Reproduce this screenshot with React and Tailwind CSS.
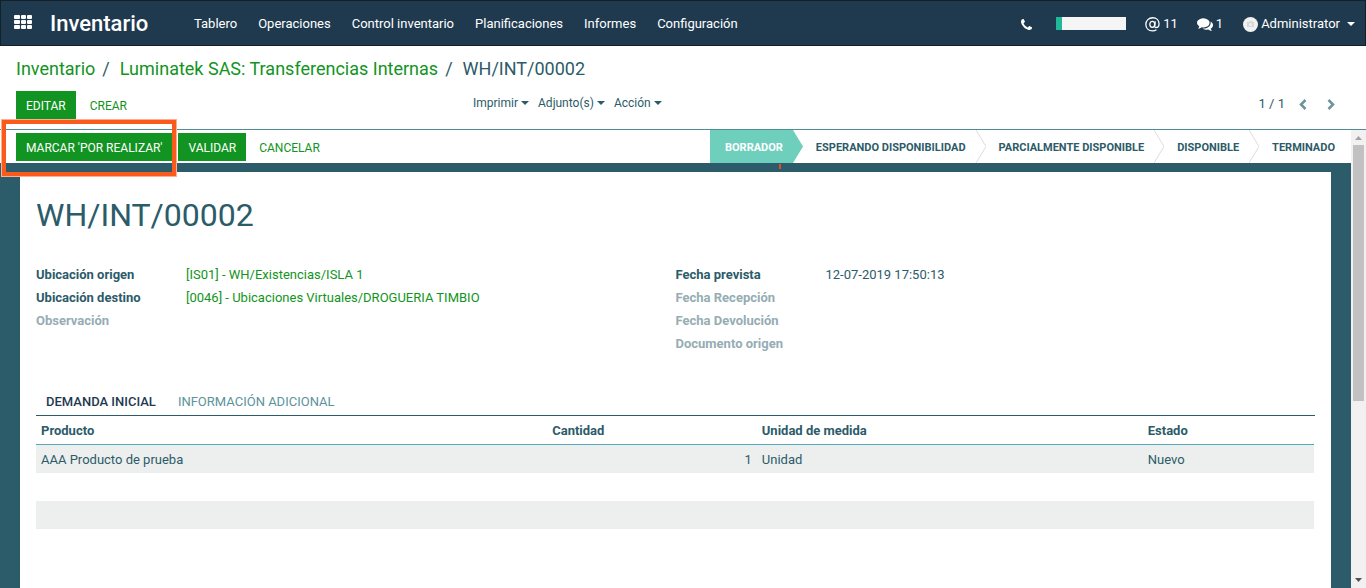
import { useState } from 'react';

const menuItems = ['Tablero', 'Operaciones', 'Control inventario', 'Planificaciones', 'Informes', 'Configuración'];

const steps = ['Borrador', 'Esperando disponibilidad', 'Parcialmente disponible', 'Disponible', 'Terminado'];

const leftFields = [
  { label: 'Ubicación origen', value: '[IS01] - WH/Existencias/ISLA 1', link: true },
  { label: 'Ubicación destino', value: '[0046] - Ubicaciones Virtuales/DROGUERIA TIMBIO', link: true },
  { label: 'Observación' },
];

const rightFields = [
  { label: 'Fecha prevista', value: '12-07-2019 17:50:13' },
  { label: 'Fecha Recepción' },
  { label: 'Fecha Devolución' },
  { label: 'Documento origen' },
];

const Caret = () => (
  <svg width="8" height="4" viewBox="0 0 8 4" fill="currentColor" aria-hidden="true">
    <path d="M0 0h8L4 4z" />
  </svg>
);

const GridIcon = () => (
  <svg width="19" height="14" viewBox="0 0 19 14" fill="currentColor" aria-hidden="true">
    {[0, 5, 10].map((y) =>
      [0, 7, 13].map((x) => <rect key={`${x}-${y}`} x={x} y={y} width={x === 0 ? 6 : 5} height="4" rx="1" />)
    )}
  </svg>
);

const PhoneIcon = () => (
  <svg width="11" height="11" viewBox="0 0 1408 1408" fill="currentColor" aria-hidden="true">
    <path d="M1408 1112q0 27-10 70.5t-21 68.5q-21 50-122 106-94 51-186 51-27 0-52.5-3.5t-57.5-12.5-47.5-14.5-55.5-20.5-49-18q-98-35-175-83-128-79-264.5-215.5t-215.5-264.5q-48-77-83-175-3-9-18-49t-20.5-55.5-14.5-47.5-12.5-57.5-3.5-52.5q0-92 51-186 56-101 106-122 25-11 68.5-21t70.5-10q14 0 21 3 18 6 53 76 11 19 30 54t35 63.5 31 53.5q3 4 17.5 25t21.5 35.5 7 28.5q0 20-28.5 50t-62 55-62 53-28.5 46q0 9 5 22.5t8.5 20.5 14 24 11.5 19q76 137 174 235t235 174q2 1 19 11.5t24 14 20.5 8.5 22.5 5q18 0 46-28.5t53-62 55-62 50-28.5q14 0 28.5 7t35.5 21.5 25 17.5q25 15 53.5 31t63.5 35 54 30q70 35 76 53 3 7 3 21z" />
  </svg>
);

const CommentsIcon = () => (
  <svg width="16" height="16" viewBox="0 0 1792 1792" fill="currentColor" aria-hidden="true">
    <path d="M1408 768q0 139-94 257t-256.5 186.5-353.5 68.5q-86 0-176-16-124 88-278 128-36 9-86 16h-3q-11 0-20.5-8t-11.5-21q-1-3-1-6.5t.5-6.5 2-6l2.5-5 3.5-5.5 4-5 4.5-5 4-4.5q5-6 23-25t26-29.5 22.5-29 25-38.5 20.5-44q-124-72-195-177t-71-224q0-139 94-257t256.5-186.5 353.5-68.5 353.5 68.5 256.5 186.5 94 257zm384 256q0 120-71 224.5t-195 176.5q10 24 20.5 44t25 38.5 22.5 29 26 29.5 23 25q1 1 4 4.5t4.5 5 4 5 3.5 5.5l2.5 5t2 6 .5 6.5-1 6.5q-3 14-13 22t-22 7q-50-7-86-16-154-40-278-128-90 16-176 16-271 0-472-132 58 4 88 4 161 0 309-45t264-129q125-92 192-212t67-254q0-77-23-152 129 71 204 178t75 230z" />
  </svg>
);

const AtIcon = () => (
  <svg width="15" height="15" viewBox="0 0 14 14" fill="none" stroke="currentColor" strokeWidth="1.2" aria-hidden="true">
    <ellipse cx="6.8" cy="6.8" rx="2.3" ry="2.8" />
    <path d="M9.6 4 9 8.200c-.1 1.200.4 1.600 1.200 1.600 1.700 0 2.900-1.500 2.900-3.600C13.100 3 10.600.7 7.200.7 3.500.7.8 3.300.8 6.900c0 3.500 2.500 6 6.200 6 1.500 0 2.600-.3 3.700-1" />
  </svg>
);

const Avatar = () => (
  <svg width="15" height="15" viewBox="0 0 15 15" aria-hidden="true">
    <circle cx="7.5" cy="7.5" r="7.5" fill="#f1f1f1" />
    <path d="M4 5h2l1-1h2l1 1h1v5H4z" fill="#d8d8d8" />
    <circle cx="7.5" cy="7.5" r="1.5" fill="#f1f1f1" />
  </svg>
);

const Chevron = ({ d }) => (
  <svg width="8" height="11" viewBox="0 0 8 11" fill="none" stroke="currentColor" strokeWidth="2.5" aria-hidden="true">
    <path d={d} />
  </svg>
);

function Navbar() {
  return (
    <nav className="flex h-[46px] items-center border border-[#12202c] bg-[#1f3a4f] pl-[13px] pr-[10px] text-white">
      <button aria-label="Aplicaciones" className="pb-[2px]">
        <GridIcon />
      </button>
      <h1 className="ml-[17px] w-[137px] pt-[2px] text-[22px] font-medium leading-none">Inventario</h1>
      <div className="ml-[7px] flex flex-1 items-center gap-[21px] pt-[2px]">
        {menuItems.map((item) => (
          <a key={item} href="#">{item}</a>
        ))}
      </div>
      <div className="flex items-center">
        <button aria-label="Teléfono" className="pt-[2px]"><PhoneIcon /></button>
        <div className="ml-6 h-[13px] w-[70px] bg-[#f5f5f5]">
          <div className="h-full w-[6px] bg-[#21b799]" />
        </div>
        <button className="ml-[19px] flex items-center gap-[3px] pt-[2px]"><AtIcon />11</button>
        <button className="ml-[19px] flex items-center gap-[3px] pt-[2px]"><CommentsIcon />1</button>
        <button className="ml-5 flex items-center gap-[3px] pt-[2px]">
          <Avatar />
          Administrator
          <span className="ml-1"><Caret /></span>
        </button>
      </div>
    </nav>
  );
}

function ControlPanel() {
  return (
    <header className="border-b border-[#4f8c93] px-4">
      <ol className="flex pt-3 text-[18px] leading-[22px]">
        <li><a href="#" className="text-[#119422]">Inventario</a></li>
        <li className="ml-[7px]">/</li>
        <li className="ml-[10px]"><a href="#" className="text-[#119422]">Luminatek SAS: Transferencias Internas</a></li>
        <li className="ml-[7px]">/</li>
        <li className="ml-[10px]">WH/INT/00002</li>
      </ol>
      <div className="flex pb-[10px] pt-[11px]">
        <div className="flex w-[457px] items-center gap-1">
          <button className="h-7 bg-[#119422] px-[10px] pt-[2px] text-[12px] text-white">EDITAR</button>
          <button className="h-7 px-[10px] pt-[2px] text-[12px] text-[#119422]">CREAR</button>
        </div>
        <div className="flex h-6 items-center gap-[9px] text-[12px]">
          {['Imprimir', 'Adjunto(s)', 'Acción'].map((item) => (
            <button key={item} className="flex items-center gap-[3px]">{item}<Caret /></button>
          ))}
        </div>
        <div className="flex flex-1 items-center justify-end pb-[2px] pr-[15px]">
          <span>1 / 1</span>
          <button aria-label="Anterior" className="ml-[14px] text-[#6f929d]"><Chevron d="M6.5 1 2 5.5 6.5 10" /></button>
          <button aria-label="Siguiente" className="ml-5 text-[#6f929d]"><Chevron d="M1.5 1 6 5.5 1.5 10" /></button>
        </div>
      </div>
    </header>
  );
}

function StatusBar() {
  return (
    <div className="flex h-[33px] justify-between bg-white pl-4">
      <div className="flex items-center gap-[3px] pt-[1px] text-[12px] text-white">
        <div className="relative">
          <button className="h-7 bg-[#119422] pl-[10px] pr-[13px] pt-[2px]">MARCAR 'POR REALIZAR'</button>
          <div className="pointer-events-none absolute -bottom-4 -left-[15px] -right-[2px] -top-[14px] border border-[#fbb08f]">
            <div className="h-full border-4 border-[#fa5a1c]" />
          </div>
        </div>
        <button className="h-7 bg-[#119422] px-[10px] pt-[2px]">VALIDAR</button>
        <button className="h-7 px-[10px] pt-[2px] text-[#119422]">CANCELAR</button>
      </div>
      <ol className="flex text-[11px] font-bold uppercase">
        {steps.map((step, i) => (
          <li key={step} className="flex">
            <span className={i === 0 ? 'relative flex items-center bg-[#6fcfbd] pl-[15px] pr-[10px] pt-[2px] text-white' : 'flex items-center pl-[13px] pr-[10px] pt-[2px]'}>
              {step}
              {i === 0 && <span className="absolute -bottom-[6px] right-3 h-[5px] w-[2px] bg-[#e0501f]" />}
            </span>
            {i < steps.length - 1 ? (
              <svg width="10" height="33" viewBox="0 0 10 33" aria-hidden="true">
                <path d="M0 0 10 16.5 0 33" fill={i === 0 ? '#6fcfbd' : 'none'} stroke={i === 0 ? 'none' : '#dcdcdc'} />
              </svg>
            ) : (
              <span className="w-[6px]" />
            )}
          </li>
        ))}
      </ol>
    </div>
  );
}

function FieldGroup({ fields }) {
  return (
    <dl className="w-1/2 leading-[23px]">
      {fields.map((f) => (
        <div key={f.label} className="flex">
          <dt className={f.value ? 'w-[150px] font-bold' : 'w-[150px] font-bold text-[#95adb3]'}>{f.label}</dt>
          <dd>{f.link ? <a href="#" className="text-[#119422]">{f.value}</a> : f.value}</dd>
        </div>
      ))}
    </dl>
  );
}

function MovesTable() {
  return (
    <div className="pr-px">
      <table className="w-full table-fixed border-separate border-spacing-0 text-left">
        <thead>
          <tr className="h-[29px]">
            <th className="w-[40%] border-b border-[#55a9bb] px-[5px] pt-[2px]">Producto</th>
            <th className="border-b border-[#55a9bb] px-[5px] pt-[2px]">Cantidad</th>
            <th className="w-[30.2%] border-b border-[#55a9bb] px-[5px] pt-[2px]">Unidad de medida</th>
            <th className="w-[13.4%] border-b border-[#55a9bb] px-[5px] pt-[2px]">Estado</th>
          </tr>
        </thead>
        <tbody>
          <tr className="h-7 bg-[#edefee]">
            <td className="px-[5px] pt-[2px]">AAA Producto de prueba</td>
            <td className="px-[5px] pt-[2px] text-right">1</td>
            <td className="px-[5px] pt-[2px]">Unidad</td>
            <td className="px-[5px] pt-[2px]">Nuevo</td>
          </tr>
          <tr className="h-7"><td colSpan={4} /></tr>
          <tr className="h-7 bg-[#edefee]"><td colSpan={4} /></tr>
        </tbody>
      </table>
    </div>
  );
}

function Sheet() {
  const [tab, setTab] = useState('moves');
  const tabClass = (name) => (tab === name ? 'font-medium text-[#1f3a4f]' : 'text-[#5c939b]');

  return (
    <main className="mx-5 mt-[9px] flex-1 bg-white px-4 pb-8">
      <h2 className="pt-6 text-[32px] leading-[38px]">WH/INT/00002</h2>
      <div className="mt-[29px] flex">
        <FieldGroup fields={leftFields} />
        <FieldGroup fields={rightFields} />
      </div>
      <div role="tablist" className="mt-8 flex h-[29px] gap-[22px] border-b border-[#2c5b69] pl-[10px] pt-[2px]">
        <button role="tab" aria-selected={tab === 'moves'} className={tabClass('moves')} onClick={() => setTab('moves')}>
          DEMANDA INICIAL
        </button>
        <button role="tab" aria-selected={tab === 'extra'} className={tabClass('extra')} onClick={() => setTab('extra')}>
          INFORMACIÓN ADICIONAL
        </button>
      </div>
      {tab === 'moves' && <MovesTable />}
    </main>
  );
}

function Scrollbar() {
  return (
    <div className="flex w-[15px] flex-col items-center bg-[#f1f1f1]" aria-hidden="true">
      <svg width="15" height="15" viewBox="0 0 15 15"><path d="M4 10h7L7.5 6z" fill="#a3a3a3" /></svg>
      <div className="h-64 w-[11px] bg-[#c1c1c1]" />
      <div className="flex-1" />
      <svg width="15" height="15" viewBox="0 0 15 15"><path d="M4 5h7L7.5 9z" fill="#505050" /></svg>
    </div>
  );
}

export default function App() {
  return (
    <div className="flex min-h-screen flex-col bg-white font-['Roboto',sans-serif] text-[13px] leading-[18px] text-[#2c5b69]">
      <Navbar />
      <ControlPanel />
      <div className="flex flex-1">
        <div className="flex flex-1 flex-col bg-[#2c5b69]">
          <StatusBar />
          <Sheet />
        </div>
        <Scrollbar />
      </div>
    </div>
  );
}
